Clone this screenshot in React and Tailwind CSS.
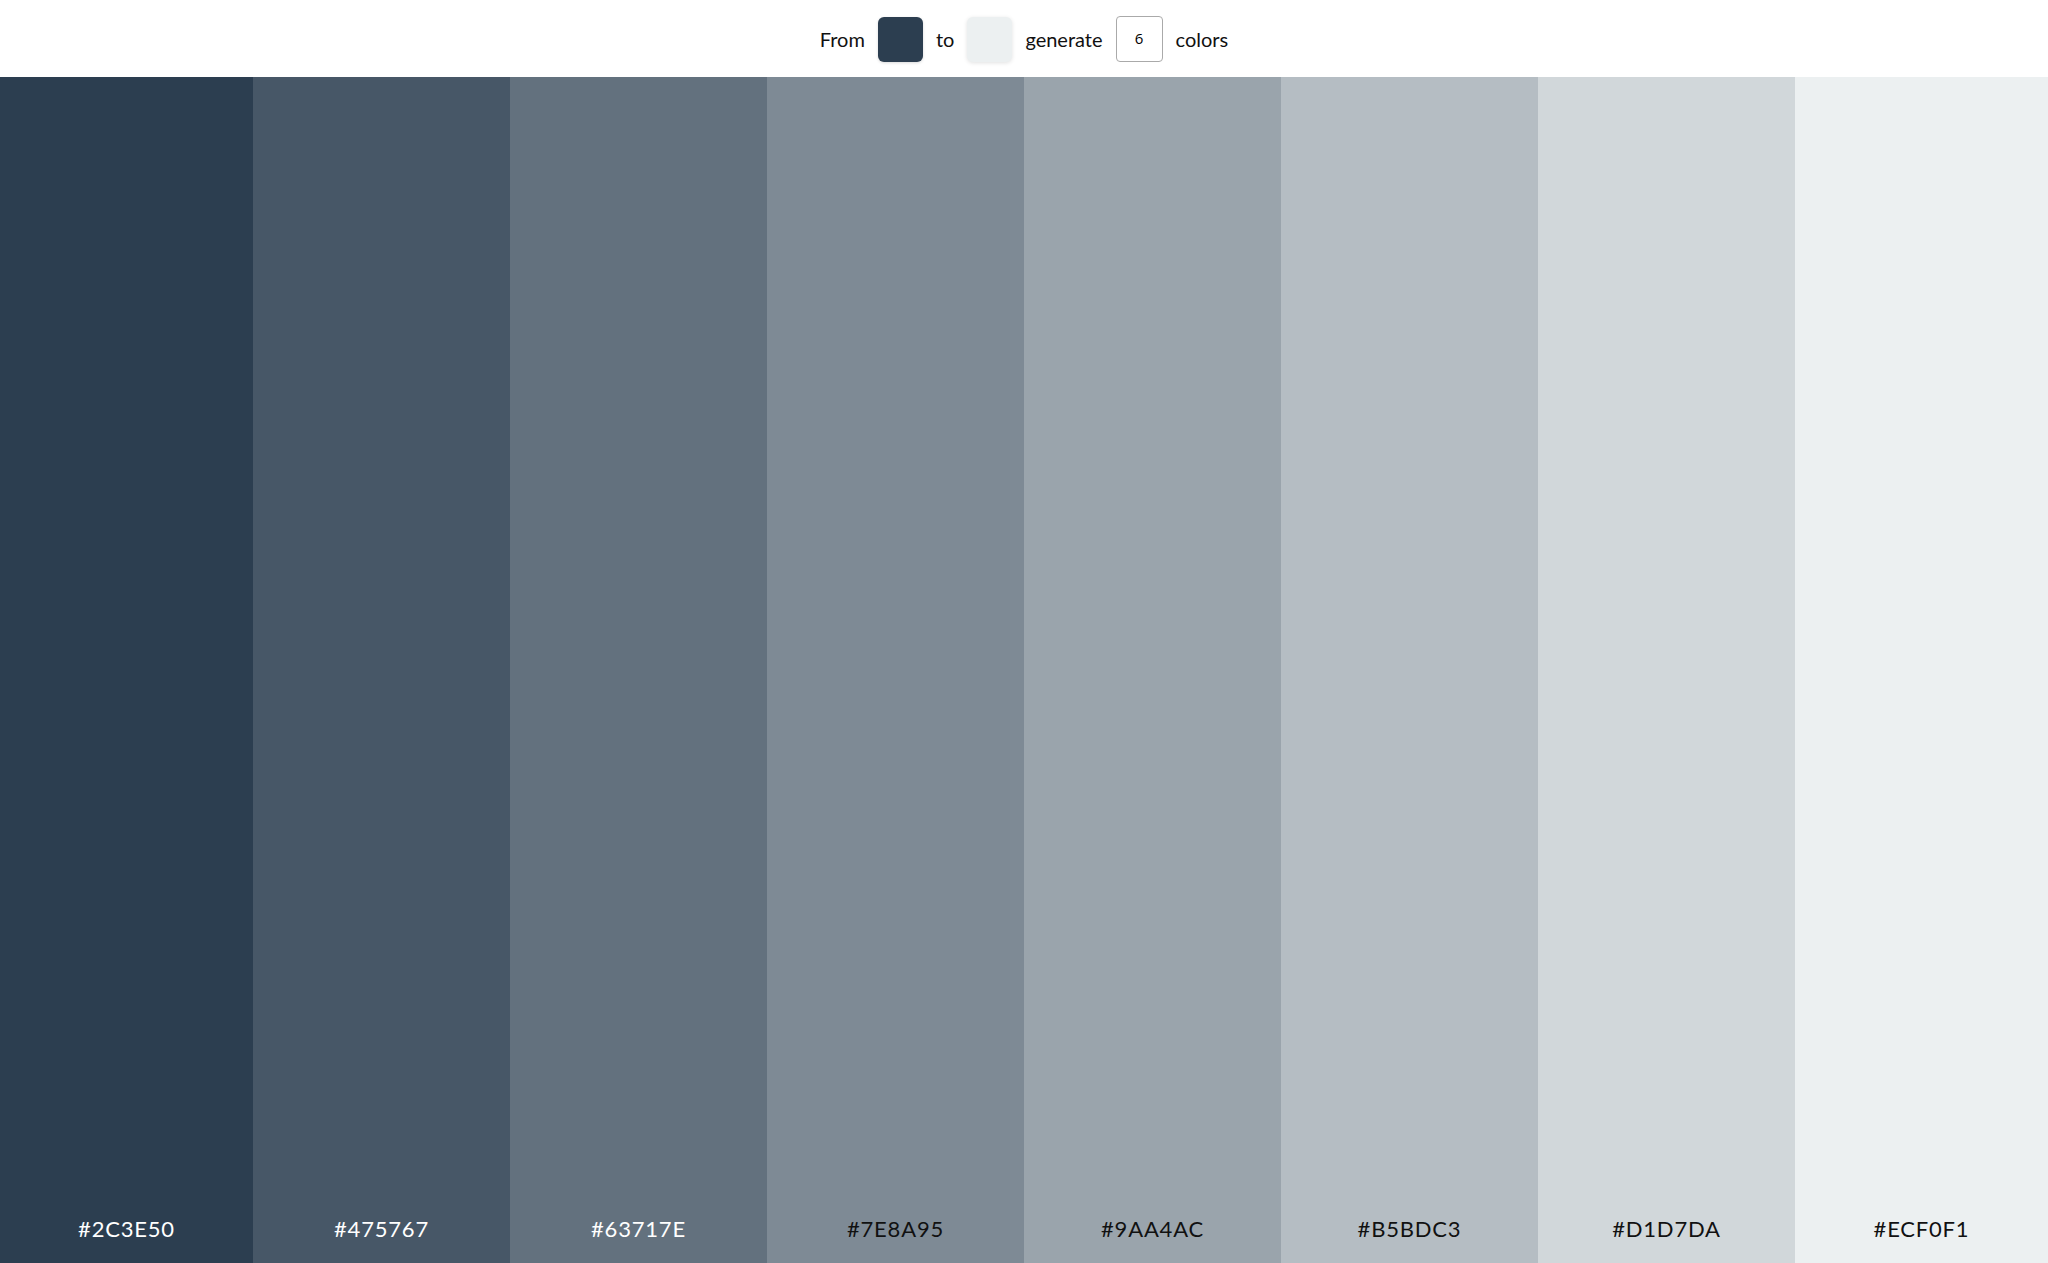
import React from "react";

const colors = [
  { hex: "#2C3E50", light: true },
  { hex: "#475767", light: true },
  { hex: "#63717E", light: true },
  { hex: "#7E8A95", light: false },
  { hex: "#9AA4AC", light: false },
  { hex: "#B5BDC3", light: false },
  { hex: "#D1D7DA", light: false },
  { hex: "#ECF0F1", light: false },
];

export default function App() {
  return (
    <div className="flex h-[1263px] w-full flex-col bg-white font-['Lato',sans-serif] text-[#111]">
      <div className="flex h-[77px] shrink-0 items-center justify-center gap-[13px] pt-[1px] text-[20px]">
        <span>From</span>
        <div className="h-[45px] w-[45px] rounded-[6px] bg-[#2C3E50] shadow-[0_1px_3px_rgba(0,0,0,0.15)]" />
        <span>to</span>
        <div className="h-[45px] w-[45px] rounded-[6px] bg-[#ECF0F1] shadow-[0_1px_4px_rgba(0,0,0,0.12)]" />
        <span>generate</span>
        <div className="flex h-[46px] w-[47px] items-center justify-center rounded-[4px] border border-[#aaa] pb-[2px] font-['Open_Sans',sans-serif] text-[15px] text-black">
          6
        </div>
        <span>colors</span>
      </div>
      <div className="grid flex-1 grid-cols-[253px_repeat(6,257px)_1fr]">
        {colors.map((c) => (
          <div
            key={c.hex}
            className={`flex flex-col items-center justify-end pb-[21px] ${c.light ? "text-white" : "text-[#111]"}`}
            style={{ backgroundColor: c.hex }}
          >
            <span className="text-[22px] leading-[26px] tracking-[0.8px]">{c.hex}</span>
          </div>
        ))}
      </div>
    </div>
  );
}
